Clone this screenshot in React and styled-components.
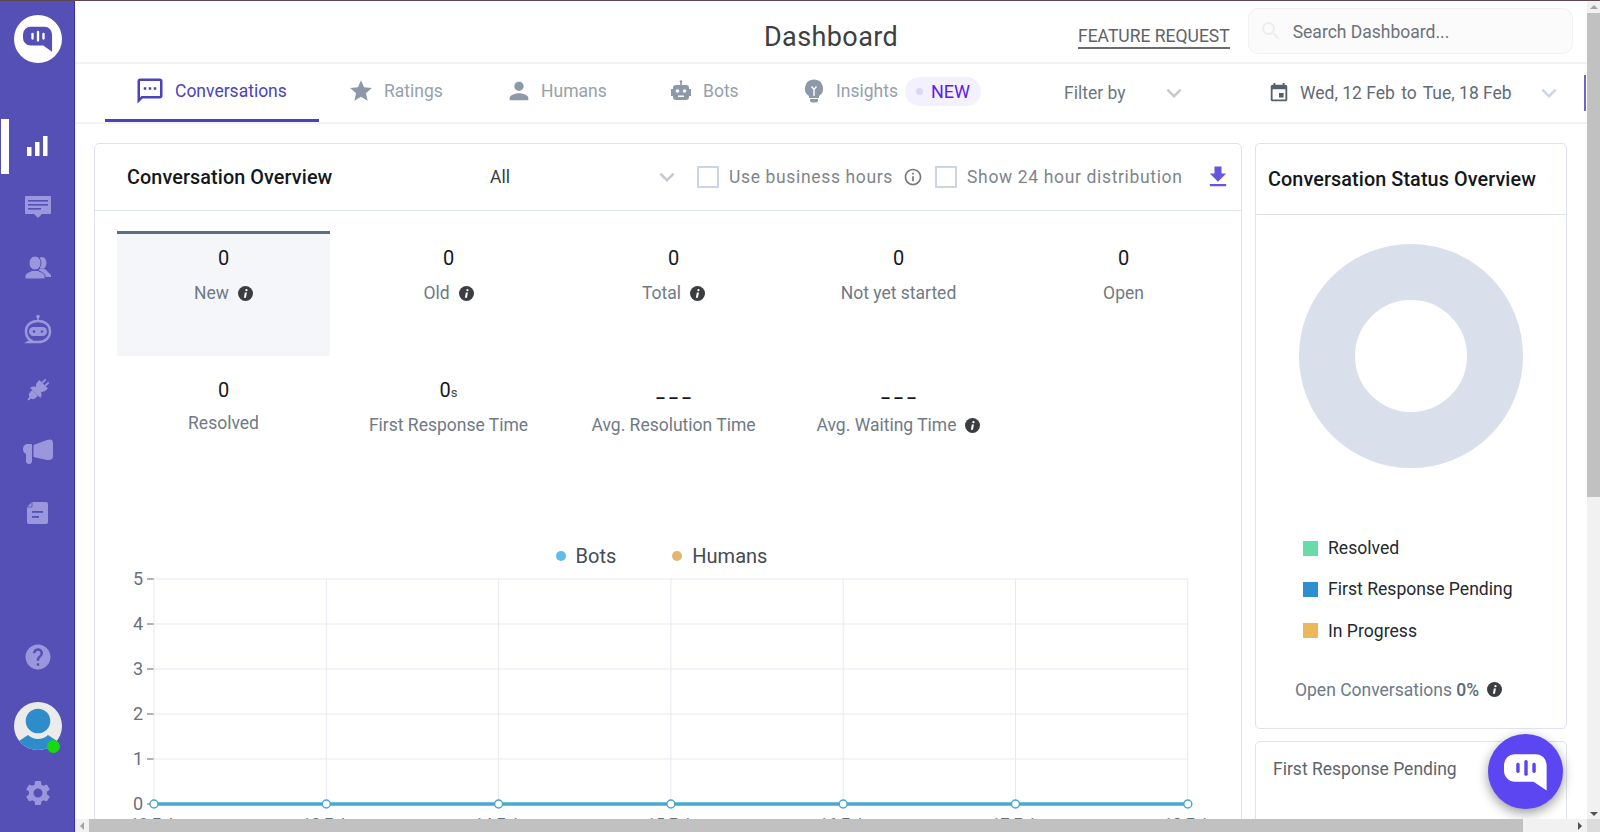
import React from 'react';
import styled, { createGlobalStyle } from 'styled-components';
import {
  MdStar, MdPerson, MdEvent, MdExpandMore, MdFileDownload,
  MdHelp, MdSettings, MdInfoOutline, MdSearch, MdOutlineSms,
} from 'react-icons/md';

const Global = createGlobalStyle`
  html, body { margin: 0; padding: 0; height: 100%; overflow: hidden; background: #fff; }
  body { font-family: Roboto, "Liberation Sans", sans-serif; }
  #root { height: 100%; }
`;

const Page = styled.div`
  position: relative;
  height: 832px;
  display: grid;
  grid-template-columns: 75px 1fr 13px;
  grid-template-rows: 1fr 13px;
  border-top: 1px solid #5d4a50;
  box-sizing: border-box;
`;

const Sidebar = styled.nav`
  grid-row: 1 / 3;
  background: #5450b5;
  border-right: 1px solid #3a2cc0;
  display: flex;
  flex-direction: column;
  align-items: center;
  padding: 14px 0 0 1px;
  box-sizing: border-box;
`;

const LogoCircle = styled.div`
  width: 48px;
  height: 48px;
  border-radius: 50%;
  background: #fff;
  display: flex;
  align-items: center;
  justify-content: center;
  margin-bottom: 52px;
`;

const NavItem = styled.div`
  position: relative;
  width: 100%;
  height: 61.2px;
  display: flex;
  align-items: center;
  justify-content: center;

  ${p => p.$active && `
    &::before {
      content: '';
      position: absolute;
      left: 0;
      top: 4px;
      width: 8px;
      height: 55px;
      background: #fff;
    }
  `}
`;

const SideBottom = styled.div`
  margin-top: auto;
  width: 100%;
  display: flex;
  flex-direction: column;
  align-items: center;
  padding-bottom: 24px;
  color: #9a97dc;
  font-size: 30px;
  gap: 28px;

  svg:first-child {
    margin-bottom: 2px;
  }
`;

const Avatar = styled.div`
  position: relative;
  width: 48px;
  height: 48px;
`;

const OnlineDot = styled.span`
  position: absolute;
  right: 2px;
  bottom: -3px;
  width: 13px;
  height: 13px;
  border-radius: 50%;
  background: #17d90f;
`;

const Main = styled.main`
  position: relative;
  overflow: hidden;
  min-width: 0;
`;

const Header = styled.header`
  height: 61px;
  display: flex;
  align-items: center;
  border-bottom: 2px solid #f1f3f4;
  position: relative;
`;

const PageTitle = styled.h1`
  margin: 0 0 0 689px;
  font-size: 27px;
  font-weight: 400;
  letter-spacing: 0.4px;
  color: #3c4043;
  line-height: 1;
  padding-top: 11px;
  width: 314px;
`;

const FeatureLink = styled.a`
  color: #5f6368;
  font-size: 17.5px;
  line-height: 20px;
  border-bottom: 2px solid #6b6b6b;
  padding-bottom: 1px;
  margin-top: 11px;
`;

const SearchBox = styled.div`
  margin-left: 18px;
  width: 325px;
  height: 46px;
  box-sizing: border-box;
  border: 1px solid #f0f1f2;
  border-radius: 10px;
  background: #fbfbfb;
  display: flex;
  align-items: center;
  padding: 0 10px;
  gap: 10px;
  color: #eceded;
  font-size: 24px;
  margin-top: -1px;
`;

const SearchText = styled.span`
  color: #6d7278;
  font-size: 17.5px;
  padding-top: 2px;
`;

const TabBar = styled.div`
  height: 58px;
  display: flex;
  align-items: center;
  border-bottom: 2px solid #f1f3f4;
  padding-left: 30px;
`;

const Tab = styled.div`
  height: 58px;
  box-sizing: border-box;
  width: ${p => p.$w}px;
  display: flex;
  align-items: center;
  padding-left: ${p => p.$pad || 0}px;
  gap: 10px;
  font-size: 17.5px;
  color: ${p => (p.$active ? '#4a43bd' : '#96a0ac')};
  border-bottom: ${p => (p.$active ? '3px solid #4a43bd' : '0')};
  padding-bottom: ${p => (p.$active ? 1 : 4)}px;
`;

const TabIcon = styled.span`
  display: flex;
  font-size: ${p => p.$size || 24}px;
  margin: 0 ${p => p.$trim || 0}px;
  color: ${p => (p.$active ? '#4a43bd' : '#8d99a8')};
`;

const NewBadge = styled.span`
  display: flex;
  align-items: center;
  gap: 8px;
  height: 29px;
  padding: 0 11px;
  margin-left: -3px;
  border-radius: 15px;
  background: #f4f1fe;
  color: #5b21e6;
  font-size: 18px;

  &::before {
    content: '';
    width: 7px;
    height: 7px;
    border-radius: 50%;
    background: #dcd6fa;
  }
`;

const FilterSelect = styled.div`
  display: flex;
  align-items: center;
  justify-content: space-between;
  width: 125px;
  margin-left: 64px;
  color: #6c7781;
  font-size: 17.5px;
`;

const Chevron = styled.span`
  display: flex;
  font-size: ${p => p.$size || 30}px;
  color: ${p => p.$color || '#c5c9ce'};
  margin-left: ${p => p.$gap || 0}px;
`;

const DateRange = styled.div`
  display: flex;
  align-items: center;
  margin-left: 79px;
  color: #5f6b76;
  font-size: 17.5px;
  gap: 10px;
  width: 303px;
  justify-content: flex-start;
`;

const DateTo = styled.span`
  margin: 0 2px;
`;

const DateIcon = styled.span`
  display: flex;
  font-size: 22px;
  color: #56606a;
`;

const ChevronRight = styled(Chevron)`
  margin-left: 12px;
`;

const EdgeMark = styled.span`
  position: absolute;
  right: 1px;
  top: 74px;
  width: 2px;
  height: 36px;
  background: #6d67c9;
`;

const Content = styled.div`
  display: grid;
  grid-template-columns: 1148px 312px;
  gap: 13px;
  padding: 19px 0 0 19px;
  align-items: start;
`;

const Card = styled.section`
  border: 1px solid #dfe3f0;
  border-radius: 5px;
  background: #fff;
  box-sizing: border-box;
`;

const OverviewHead = styled.div`
  height: 67px;
  display: flex;
  align-items: center;
  border-bottom: 1px solid #dfe3f0;
  padding-left: 32px;
  box-sizing: border-box;
`;

const CardTitle = styled.h2`
  margin: 0;
  font-size: 19.8px;
  font-weight: 500;
  color: #14181c;
  width: ${p => p.$w || 'auto'};
  letter-spacing: 0.1px;
`;

const AllSelect = styled.div`
  width: 207px;
  padding-right: 15px;
  box-sizing: border-box;
  display: flex;
  align-items: center;
  justify-content: space-between;
  font-size: 17.5px;
  color: #333a41;
`;

const CheckLabel = styled.label`
  display: flex;
  align-items: center;
  gap: 10px;
  margin-left: ${p => p.$gap || 0}px;
  color: #80858a;
  font-size: 17.5px;
  letter-spacing: 0.65px;
`;

const CheckBox = styled.span`
  width: 18px;
  height: 18px;
  border: 2px solid #ccd5e6;
  display: block;
`;

const StatGrid = styled.div`
  display: grid;
  grid-template-columns: repeat(5, 213px);
  grid-auto-rows: 125px;
  column-gap: 12px;
  row-gap: 7px;
  padding: 20px 0 0 22px;
`;

const Stat = styled.div`
  box-sizing: border-box;
  padding-top: ${p => (p.$active ? 13 : 16)}px;
  display: flex;
  flex-direction: column;
  align-items: center;
  background: ${p => (p.$active ? '#f5f6fa' : 'transparent')};
  border-top: ${p => (p.$active ? '3px solid #5b6f80' : '0')};
`;

const StatValue = styled.div`
  height: 22px;
  line-height: 22px;
  font-size: 20px;
  color: #14181c;
  margin-bottom: ${p => (p.$tight ? 11 : 13)}px;
`;

const Unit = styled.span`
  font-size: 13px;
  color: #444;
`;

const Dashes = styled.span`
  letter-spacing: 5px;
  margin-right: -5px;
  position: relative;
  top: 0;
  font-size: 18px;
  font-weight: 500;
`;

const StatLabel = styled.div`
  display: flex;
  align-items: center;
  gap: 9px;
  font-size: 17.5px;
  color: #6f7a85;
  height: 22px;
`;

const InfoDot = styled.span`
  display: flex;
`;

const ChartWrap = styled.div`
  padding-top: 56px;
`;

const ChartLegend = styled.div`
  display: flex;
  justify-content: center;
  gap: 56px;
  font-size: 20px;
  color: #444b52;
  height: 24px;
  margin-right: 13px;
  align-items: center;
  margin-bottom: 1px;
`;

const ChartKey = styled.span`
  display: flex;
  align-items: center;
  gap: 10px;

  &::before {
    content: '';
    width: 10px;
    height: 10px;
    border-radius: 50%;
    background: ${p => p.$color};
  }
`;

const ChartSvg = styled.svg`
  display: block;
`;

const SideColumn = styled.div`
  display: flex;
  flex-direction: column;
  gap: 12px;
`;

const StatusCard = styled(Card)`
  height: 586px;
`;

const StatusHead = styled.div`
  height: 71px;
  display: flex;
  align-items: center;
  padding-left: 12px;
  border-bottom: 1px solid #dfe3f0;
  box-sizing: border-box;
`;

const DonutWrap = styled.div`
  display: flex;
  justify-content: center;
  padding-top: 29px;
  height: 322px;
  box-sizing: border-box;
`;

const LegendList = styled.ul`
  list-style: none;
  margin: 0;
  padding: 0 0 0 47px;
  display: flex;
  flex-direction: column;
  gap: 19.4px;
`;

const LegendItem = styled.li`
  display: flex;
  align-items: center;
  gap: 10px;
  height: 22px;
  font-size: 17.6px;
  color: #23292f;

  &::before {
    content: '';
    width: 15px;
    height: 15px;
    background: ${p => p.$color};
  }
`;

const OpenRow = styled.div`
  display: flex;
  align-items: center;
  gap: 8px;
  margin: 38px 0 0 39px;
  font-size: 17.5px;
  color: #6d7a87;

  b {
    font-weight: 500;
    color: #5d6b78;
  }
`;

const PendingCard = styled(Card)`
  height: 120px;
  padding: 17px 17px;
  font-size: 17.5px;
  color: #5c646d;
`;

const ChatFab = styled.button`
  position: absolute;
  left: 1413px;
  top: 733px;
  width: 75px;
  height: 75px;
  border: 0;
  padding: 0;
  border-radius: 50%;
  background: #5b46f2;
  box-shadow: 0 4px 12px rgba(0, 0, 0, 0.4);
  display: flex;
  align-items: center;
  justify-content: center;
`;

const ScrollY = styled.div`
  background: #f1f1f1;
  display: flex;
  flex-direction: column;
  align-items: center;
`;

const ScrollThumbY = styled.div`
  width: 100%;
  height: 484px;
  background: #c1c1c1;
`;

const ScrollX = styled.div`
  grid-column: 2 / 3;
  background: #f1f1f1;
  display: flex;
  align-items: center;
`;

const ScrollThumbX = styled.div`
  width: 1434px;
  height: 100%;
  background: #c1c1c1;
`;

const Arrow = styled.span`
  width: 0;
  height: 0;
  border: 4px solid transparent;
  ${p => p.$dir === 'up' && 'border-bottom-color: #a3a3a3; margin: 4px 0; border-top-width: 0;'}
  ${p => p.$dir === 'down' && 'border-top-color: #505050; margin-top: auto; margin-bottom: 3px; border-bottom-width: 0;'}
  ${p => p.$dir === 'left' && 'border-right-color: #a3a3a3; border-left-width: 0; margin: 0 5px;'}
  ${p => p.$dir === 'right' && 'border-left-color: #505050; border-right-width: 0; margin-left: auto; margin-right: 5px;'}
`;

const Corner = styled.div`
  background: #dcdcdc;
`;

const STATS = [
  { value: '0', label: 'New', info: true, active: true },
  { value: '0', label: 'Old', info: true },
  { value: '0', label: 'Total', info: true },
  { value: '0', label: 'Not yet started' },
  { value: '0', label: 'Open' },
  { value: '0', label: 'Resolved', tight: true },
  { value: '0', unit: 's', label: 'First Response Time' },
  { dashes: true, label: 'Avg. Resolution Time' },
  { dashes: true, label: 'Avg. Waiting Time', info: true },
];

const STATUS = [
  { label: 'Resolved', color: '#67dca9' },
  { label: 'First Response Pending', color: '#2c8fd1' },
  { label: 'In Progress', color: '#ecb85b' },
];

const DAYS = ['12 Feb', '13 Feb', '14 Feb', '15 Feb', '16 Feb', '17 Feb', '18 Feb'];

const ICON = '#9a97dc';
const SIDE = '#5450b5';

function LogoMark({ size, bubble, bar }) {
  return (
    <svg width={size} height={size} viewBox="0 0 32 32">
      <path d="M8 3h15a8 8 0 0 1 8 8v18.500L21.500 23H8a8 8 0 0 1-8-8v-4a8 8 0 0 1 8-8z" fill={bubble} />
      <rect x="8.900" y="9.300" width="2.500" height="7.400" rx="1.200" fill={bar} />
      <rect x="14.750" y="7.200" width="2.500" height="11.600" rx="1.200" fill={bar} />
      <rect x="20.600" y="9.300" width="2.500" height="7.400" rx="1.200" fill={bar} />
    </svg>
  );
}

function StatsIcon() {
  return (
    <svg width="21" height="20" viewBox="0 0 21 20" fill="#fff">
      <rect x="0" y="11" width="4.500" height="9" />
      <rect x="8" y="6" width="4.500" height="14" />
      <rect x="16" y="0" width="4.500" height="20" />
    </svg>
  );
}

function ChatIcon() {
  return (
    <svg width="26" height="22" viewBox="0 0 26 22">
      <path d="M1 0h24a1 1 0 0 1 1 1v16a1 1 0 0 1-1 1h-8l-4 4-4-4H1a1 1 0 0 1-1-1V1a1 1 0 0 1 1-1z" fill={ICON} />
      <rect x="3" y="4" width="20" height="1.600" fill={SIDE} />
      <rect x="3" y="8" width="20" height="1.600" fill={SIDE} />
      <rect x="3" y="12" width="13" height="1.600" fill={SIDE} />
    </svg>
  );
}

function HumansIcon() {
  return (
    <svg width="26" height="23" viewBox="0 0 26 23" fill={ICON}>
      <ellipse cx="17" cy="7" rx="4.500" ry="6" />
      <path d="M14 13h6l6 6v2H16z" />
      <ellipse cx="10" cy="7" rx="6" ry="7" stroke={SIDE} strokeWidth="1" />
      <path d="M0 23v-2.500c0-3.500 4.500-4.500 7-6h6c2.500 1.500 7 2.500 7 6V23z" stroke={SIDE} strokeWidth="1" />
    </svg>
  );
}

function BotIcon() {
  return (
    <svg width="28" height="30" viewBox="0 0 28 30" fill="none">
      <circle cx="14" cy="2.500" r="1.800" fill={ICON} />
      <path d="M14 3v4" stroke={ICON} strokeWidth="1.500" />
      <path d="M7 26.500C3.500 24.500 2 21.500 2 17.500 2 11 7 7 14 7s12 4 12 10.500S21 28 14 28H4.500z" stroke={ICON} strokeWidth="2.500" />
      <rect x="5" y="13" width="18" height="9" rx="4.500" fill={ICON} />
      <circle cx="10" cy="17.500" r="1.300" fill={SIDE} />
      <circle cx="18" cy="17.500" r="1.300" fill={SIDE} />
    </svg>
  );
}

function PlugIcon() {
  return (
    <svg width="24" height="24" viewBox="0 0 24 24" fill={ICON}>
      <g transform="rotate(45 12 12)">
        <rect x="9" y="-1" width="1.800" height="5" />
        <rect x="13.200" y="-1" width="1.800" height="5" />
        <path d="M6 4h12v2.500a6 6 0 0 1-12 0z" />
        <rect x="11" y="11" width="2" height="3" />
        <path d="M5 15.500a7 5 0 0 1 14 0V16H5z" />
        <path d="M8 16h8v3a4 4 0 0 1-8 0z" />
        <rect x="11" y="22" width="2" height="4" />
      </g>
    </svg>
  );
}

function MegaphoneIcon() {
  return (
    <svg width="30" height="25" viewBox="0 0 30 25" fill={ICON}>
      <path d="M10.500 6L24 1c3-1 6-1 6 3v13c0 4-3 4-6 4l-13.500-3z" />
      <path d="M0 10c0-3 2-5 5-5h4v17a3 3 0 0 1-6 0v-7c-2-1-3-3-3-5z" />
    </svg>
  );
}

function DocIcon() {
  return (
    <svg width="21" height="22" viewBox="0 0 21 22">
      <path d="M5 0h14a2 2 0 0 1 2 2v18a2 2 0 0 1-2 2H2a2 2 0 0 1-2-2V5z" fill={ICON} />
      <path d="M5 0v5H0" fill="none" stroke={SIDE} strokeWidth="0.800" />
      <rect x="5" y="9" width="11" height="1.800" fill={SIDE} />
      <rect x="5" y="14" width="7" height="1.800" fill={SIDE} />
    </svg>
  );
}

function TabBotIcon() {
  return (
    <svg width="24" height="24" viewBox="0 0 24 24" fill="#8d99a8">
      <rect x="11.200" y="2" width="1.600" height="4" />
      <circle cx="12" cy="2.500" r="1.200" />
      <rect x="4" y="6" width="16" height="15" rx="3" />
      <rect x="2" y="10" width="2" height="7" />
      <rect x="20" y="10" width="2" height="7" />
      <circle cx="8.500" cy="12" r="1.800" fill="#fff" />
      <circle cx="15.500" cy="12" r="1.800" fill="#fff" />
      <rect x="9" y="16.500" width="6" height="1.500" fill="#fff" />
    </svg>
  );
}

function BulbIcon() {
  return (
    <svg width="24" height="24" viewBox="0 0 24 24" fill="#8d99a8">
      <path d="M12 .5a9 9 0 0 1 5 16.500v2H7v-2A9 9 0 0 1 12 .5z" />
      <path d="M8 20h8v1.500a2 2 0 0 1-2 2h-4a2 2 0 0 1-2-2z" />
      <path d="M9.500 7.500L12 10.500l2.500-3M12 10.500V17" stroke="#fff" strokeWidth="1.400" fill="none" />
    </svg>
  );
}

function InfoIcon() {
  return (
    <svg width="15" height="15" viewBox="0 0 16 16">
      <circle cx="8" cy="8" r="8" fill="#3b3d40" />
      <circle cx="9" cy="4.400" r="1.200" fill="#fff" />
      <path d="M7.300 6.800h2.200L8.500 12.400H6.300z" fill="#fff" />
    </svg>
  );
}

function UserAvatar() {
  return (
    <svg width="48" height="48" viewBox="0 0 48 48">
      <circle cx="24" cy="24" r="24" fill="#ebebeb" />
      <clipPath id="avatarClip"><circle cx="24" cy="24" r="24" /></clipPath>
      <g clipPath="url(#avatarClip)">
        <circle cx="24" cy="19" r="12.300" fill="#2f8ccb" />
        <path d="M5 39l9-6c3 2.500 6 4 10 4s7-1.500 10-4l9 6v10H5z" fill="#2f8ccb" />
      </g>
    </svg>
  );
}

function Chart() {
  const left = 59;
  const top = 10;
  const stepX = 172.3;
  const stepY = 45;
  const ys = [5, 4, 3, 2, 1, 0];
  const xs = DAYS.map((_, i) => left + i * stepX);
  const bottom = top + stepY * 5;
  return (
    <ChartSvg width="1140" height="275" viewBox="0 0 1140 275">
      {ys.map((v, i) => (
        <g key={v}>
          <line x1={left} x2={xs[6]} y1={top + i * stepY} y2={top + i * stepY} stroke="#e6e9f2" />
          <line x1={left - 7} x2={left} y1={top + i * stepY} y2={top + i * stepY} stroke="#666" />
          <text x={left - 11} y={top + i * stepY + 6} textAnchor="end" fontSize="18" fill="#66727d">{v}</text>
        </g>
      ))}
      {xs.map((x, i) => (
        <g key={x}>
          <line x1={x} x2={x} y1={top} y2={bottom} stroke="#e6e9f2" />
          <text x={x} y={bottom + 26} textAnchor="middle" fontSize="16" fill="#66727d">{DAYS[i]}</text>
        </g>
      ))}
      <line x1={left} x2={xs[6]} y1={bottom} y2={bottom} stroke="#49a7d3" strokeWidth="3.500" />
      {xs.map(x => (
        <circle key={x} cx={x} cy={bottom} r="4" fill="#fff" stroke="#49a7d3" strokeWidth="1.500" />
      ))}
    </ChartSvg>
  );
}

export default function App() {
  return (
    <Page>
      <Global />
      <Sidebar>
        <LogoCircle><LogoMark size={30} bubble={SIDE} bar="#fff" /></LogoCircle>
        <NavItem $active><StatsIcon /></NavItem>
        <NavItem><ChatIcon /></NavItem>
        <NavItem><HumansIcon /></NavItem>
        <NavItem><BotIcon /></NavItem>
        <NavItem><PlugIcon /></NavItem>
        <NavItem><MegaphoneIcon /></NavItem>
        <NavItem><DocIcon /></NavItem>
        <SideBottom>
          <MdHelp />
          <Avatar><UserAvatar /><OnlineDot /></Avatar>
          <MdSettings />
        </SideBottom>
      </Sidebar>

      <Main>
        <Header>
          <PageTitle>Dashboard</PageTitle>
          <FeatureLink>FEATURE REQUEST</FeatureLink>
          <SearchBox>
            <MdSearch />
            <SearchText>Search Dashboard...</SearchText>
          </SearchBox>
        </Header>

        <TabBar>
          <Tab $active $w={214} $pad={30}>
            <TabIcon $active $size={30}><MdOutlineSms /></TabIcon>
            Conversations
          </Tab>
          <Tab $w={158} $pad={29}><TabIcon $size={26}><MdStar /></TabIcon>Ratings</Tab>
          <Tab $w={163} $pad={30}><TabIcon $size={28} $trim={-2}><MdPerson /></TabIcon>Humans</Tab>
          <Tab $w={132} $pad={29}><TabIcon><TabBotIcon /></TabIcon>Bots</Tab>
          <Tab $w={228} $pad={30}>
            <TabIcon><BulbIcon /></TabIcon>
            Insights
            <NewBadge>NEW</NewBadge>
          </Tab>
          <FilterSelect>
            Filter by
            <Chevron><MdExpandMore /></Chevron>
          </FilterSelect>
          <DateRange>
            <DateIcon><MdEvent /></DateIcon>
            <span>Wed, 12 Feb <DateTo>to</DateTo> Tue, 18 Feb</span>
            <ChevronRight $color="#ccd5e6"><MdExpandMore /></ChevronRight>
          </DateRange>
          <EdgeMark />
        </TabBar>

        <Content>
          <Card>
            <OverviewHead>
              <CardTitle $w="363px">Conversation Overview</CardTitle>
              <AllSelect>
                All
                <Chevron><MdExpandMore /></Chevron>
              </AllSelect>
              <CheckLabel>
                <CheckBox />
                Use business hours
                <InfoDot><MdInfoOutline size={20} color="#777" /></InfoDot>
              </CheckLabel>
              <CheckLabel $gap={12}>
                <CheckBox />
                Show 24 hour distribution
              </CheckLabel>
              <Chevron $size={28} $color="#6257de" $gap={21}><MdFileDownload /></Chevron>
            </OverviewHead>
            <StatGrid>
              {STATS.map(s => (
                <Stat key={s.label} $active={s.active}>
                  <StatValue $tight={s.tight}>
                    {s.dashes ? <Dashes>___</Dashes> : s.value}
                    {s.unit && <Unit>{s.unit}</Unit>}
                  </StatValue>
                  <StatLabel>
                    {s.label}
                    {s.info && <InfoDot><InfoIcon /></InfoDot>}
                  </StatLabel>
                </Stat>
              ))}
            </StatGrid>
            <ChartWrap>
              <ChartLegend>
                <ChartKey $color="#62bce8">Bots</ChartKey>
                <ChartKey $color="#e3b56f">Humans</ChartKey>
              </ChartLegend>
              <Chart />
            </ChartWrap>
          </Card>

          <SideColumn>
            <StatusCard>
              <StatusHead><CardTitle>Conversation Status Overview</CardTitle></StatusHead>
              <DonutWrap>
                <svg width="224" height="224" viewBox="0 0 224 224">
                  <circle cx="112" cy="112" r="84" fill="none" stroke="#d9dfeb" strokeWidth="56" />
                </svg>
              </DonutWrap>
              <LegendList>
                {STATUS.map(s => (
                  <LegendItem key={s.label} $color={s.color}>{s.label}</LegendItem>
                ))}
              </LegendList>
              <OpenRow>
                <span>Open Conversations <b>0%</b></span>
                <InfoDot><InfoIcon /></InfoDot>
              </OpenRow>
            </StatusCard>
            <PendingCard>First Response Pending</PendingCard>
          </SideColumn>
        </Content>

        <ChatFab><LogoMark size={44} bubble="#fff" bar="#5b46f2" /></ChatFab>
      </Main>

      <ScrollY>
        <Arrow $dir="up" />
        <ScrollThumbY />
        <Arrow $dir="down" />
      </ScrollY>
      <ScrollX>
        <Arrow $dir="left" />
        <ScrollThumbX />
        <Arrow $dir="right" />
      </ScrollX>
      <Corner />
    </Page>
  );
}
